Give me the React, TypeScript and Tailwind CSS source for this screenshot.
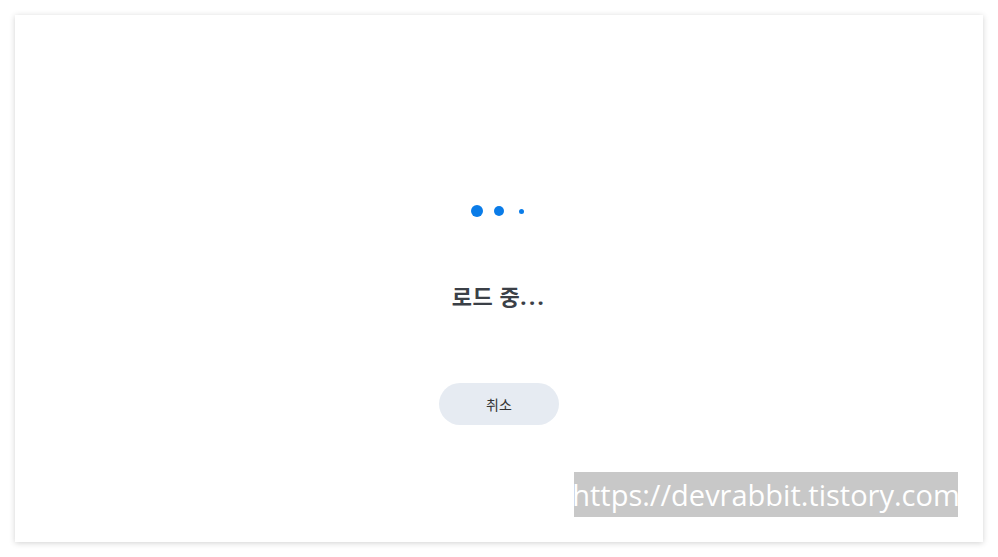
export default function App() {
  return (
    <div className="w-[998px] h-[557px] bg-white p-[15px] font-['Noto_Sans','Noto_Sans_CJK_KR',sans-serif]">
      <div className="relative h-[527px] w-[968px] bg-white shadow-[0_1px_6px_rgba(0,0,0,0.18)]">
        <div className="flex flex-col items-center pt-[190px]">
          {/* 로딩 점 */}
          <div className="flex h-[12px] items-center gap-[10px]">
            <span className="flex w-[12px] justify-center">
              <span className="h-[12px] w-[12px] rounded-full bg-[#0a7ce8]" />
            </span>
            <span className="flex w-[12px] justify-center">
              <span className="h-[10px] w-[10px] rounded-full bg-[#0a7ce8]" />
            </span>
            <span className="flex w-[12px] justify-center">
              <span className="h-[5px] w-[5px] rounded-full bg-[#0a7ce8]" />
            </span>
          </div>

          <p className="mt-[64px] text-[22px] leading-[30px] font-bold tracking-[0.5px] text-[#3b4047]">
            로드 중<span className="tracking-[2.5px]">...</span>
          </p>

          <button className="mt-[72px] h-[42px] w-[120px] rounded-full bg-[#e6ebf2] text-[14px] text-[#333]">
            취소
          </button>
        </div>

        {/* 워터마크 */}
        <div className="absolute left-[559px] top-[457px] flex h-[45px] w-[384px] items-center justify-center bg-[#c8c8c8] font-['Open_Sans',sans-serif] text-[29px] leading-none text-white">
          https://devrabbit.tistory.com
        </div>
      </div>
    </div>
  );
}
